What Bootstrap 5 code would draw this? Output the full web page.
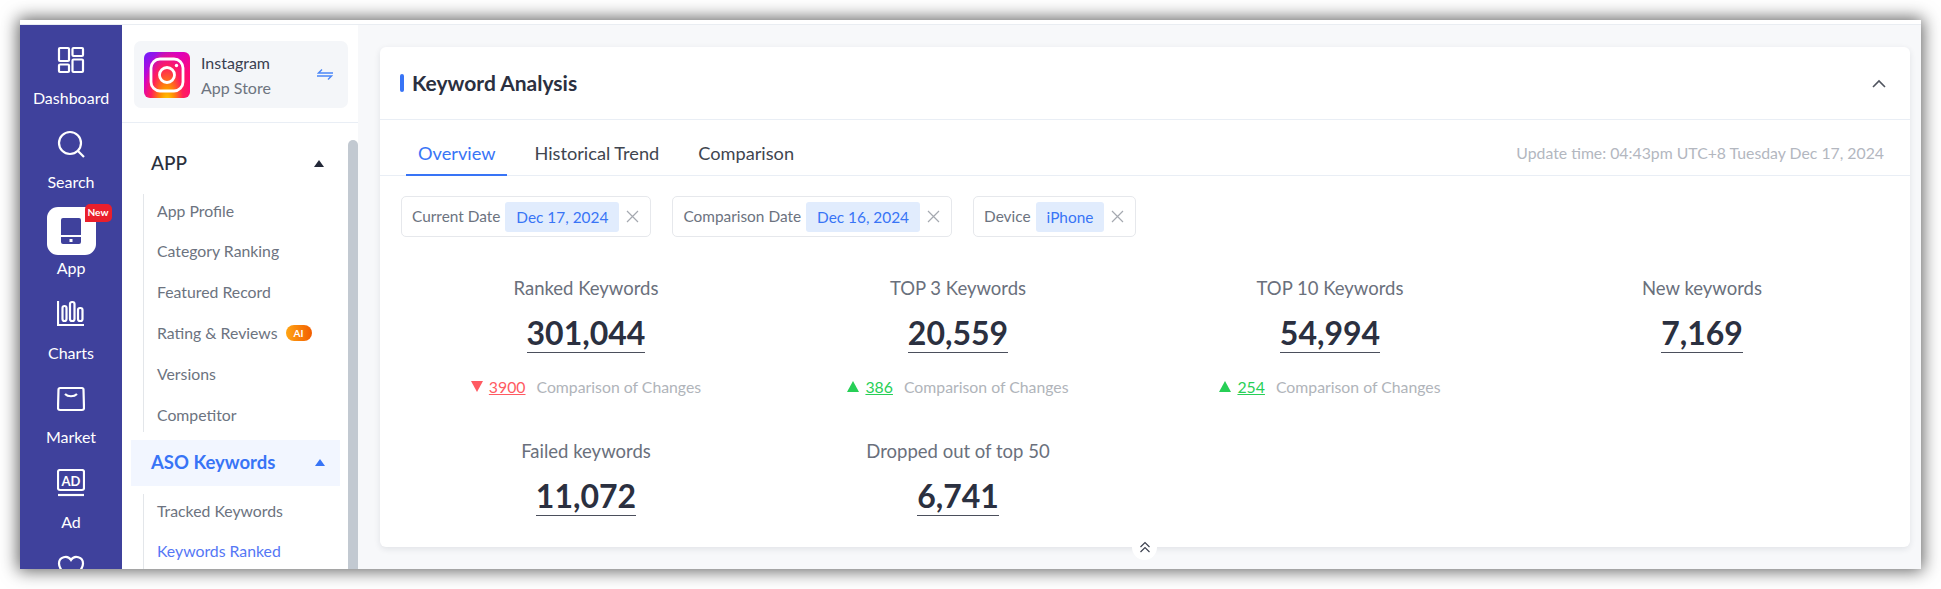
<!DOCTYPE html>
<html lang="en">
<head>
<meta charset="utf-8">
<title>Keyword Analysis</title>
<link href="https://cdn.jsdelivr.net/npm/bootstrap@5.3.0/dist/css/bootstrap.min.css" rel="stylesheet">
<style>
html,body{height:589px;overflow:hidden;background:#fff}
body{font-family:"Lato","Noto Sans",sans-serif;padding:20px;color:#2b3040}
.win{height:549px;background:#f7f8fa;box-shadow:0 0 16px 2px rgba(0,0,0,.62);overflow:hidden;display:flex;flex-direction:column}
.topstrip{height:5px;background:#fff;border-bottom:1px solid #e9edf2;flex:none}
.shell{flex:1;display:flex;min-height:0}
.rail{width:102px;flex:none;background:#3f419c;color:#fff;font-size:16px;text-align:center;overflow:hidden}
.rail-item{height:84px;display:flex;flex-direction:column;align-items:center;padding-top:21px}
.rail-item svg{width:28px;height:28px;flex:none;fill:none;stroke:#fff;stroke-width:2.2}
.rail-item span{margin-top:14px;line-height:20px}
.rail-app{height:85px;padding-top:14px}
.tile{width:49px;height:48px;flex:none;background:#fff;border-radius:11px;position:relative;display:flex;align-items:center;justify-content:center}
.rail-app span{margin-top:3px}
.rail-charts{height:85px;padding-top:22px}
.rail-charts span{margin-top:15px}
.rail-market{padding-top:22px}
.rail-ad{height:85px;padding-top:22px}
.rail-ad span{margin-top:15px}
.rail-fav{padding-top:22px}
.newtag{position:absolute;right:-16px;top:-3px;width:27px;height:18px;background:#ea1f2c;color:#fff;font-size:10px;font-weight:700;line-height:17px;border-radius:5px 5px 5px 0}
.side{width:236px;flex:none;background:#fff;display:flex;flex-direction:column;min-height:0}
.apphead{height:98px;border-bottom:1px solid #e9eef5;padding:16px 10px 0 12px;flex:none}
.appbox{height:67px;background:#f4f6f9;border-radius:7px;padding:10px;display:flex;align-items:center;gap:11px;font-size:16px;line-height:25px}
.appbox b{font-weight:400;display:block;color:#3a4050}
.appbox i{font-style:normal;display:block;color:#6d7480}
.insta{width:46px;height:46px;border-radius:6px;flex:none;background:radial-gradient(ellipse at 50% 112%,#ffd600 0,#ff9000 22%,#ff1f5a 50%,transparent 76%),linear-gradient(135deg,#6a1fff 0,#d700c8 36%,#ff0a78 70%);display:flex;align-items:center;justify-content:center}
.swap{margin-left:auto;margin-right:5px;width:16px;height:11px}
.sidebody{flex:1;display:flex;min-height:0;overflow:hidden}
.menu{flex:1;padding:17px 9px 0 9px;min-width:0}
.sbar{width:10px;flex:none;margin-top:17px;background:#c2c9d1;border-radius:5px 5px 0 0}
.mhead{height:46px;display:flex;align-items:center;justify-content:space-between;padding:0 15px 0 20px;font-size:19px;color:#2a2f3c;font-weight:500}
.mhead.on{background:#f2f6ff;color:#3874f6;font-weight:700;font-size:18.5px;margin:0 -1px 0 0}
.caret{width:0;height:0;border-left:5.5px solid transparent;border-right:5.5px solid transparent;border-bottom:7px solid #232838}
.on .caret{border-bottom-color:#3874f6}
.sub{list-style:none;margin:8px 0 8px 12px;padding:0 0 0 13px;border-left:1px solid #e3e6ea}
.sub li{height:34px;padding-bottom:1px;margin-bottom:6.8px;display:flex;align-items:center;gap:8px;font-size:15.8px;color:#6c7380}
.sub li:last-child{margin-bottom:0}
.sub li.cur{color:#5577f5}
.aitag{width:26px;height:16px;border-radius:8px;background:linear-gradient(90deg,#ffa514,#f25d00);color:#fff;font-size:10px;font-weight:700;text-align:center;line-height:16px}
.main{flex:1;padding:22px 11px 22px 22px;min-width:0}
.panel{background:#fff;border-radius:6px;height:100%;box-shadow:0 2px 6px rgba(30,40,60,.1);position:relative}
.phead{height:73px;border-bottom:1px solid #e9eef5;display:flex;align-items:center;justify-content:space-between;padding:0 24px 0 20px}
.ptitle{font-size:21px;font-weight:700;color:#2b3040;display:flex;align-items:center;gap:8px;margin:0}
.ptitle::before{content:"";width:4px;height:18px;border-radius:2px;background:#3874f6}
.tabbar{height:56px;border-bottom:1px solid #e9eef5;display:flex;padding:0 26px}
.tabx{padding:13px 12px 0;height:56px;line-height:40px;font-size:18.2px;color:#40454f;margin-right:15px}
.tabx.act{color:#3874f6;border-bottom:2px solid #3874f6}
.upd{margin-left:auto;padding-top:13px;line-height:40px;font-size:15.8px;color:#b3b7bf}
.chips{display:flex;gap:21px;padding:20px 20px 0 21px}
.chip{height:41px;border:1px solid #e6e8ec;border-radius:5px;display:flex;align-items:center;padding:0 11px 0 10px;font-size:15.4px;color:#6c7380}
.chip em{font-style:normal;height:30px;line-height:31px;padding:0 11px;background:#e1ecfd;color:#3874f6;border-radius:3px;margin:0 7px 0 5px}
.chip svg{width:13px;height:13px;stroke:#a5a9b0;stroke-width:1.2}
.stats{display:grid;grid-template-columns:repeat(4,372px);grid-auto-rows:163px;padding:31px 0 0 20px}
.stat{text-align:center}
.stat h6{font-size:18.500px;font-weight:400;color:#6a707c;margin:9px 0 0;line-height:22px}
.num{display:inline-block;font-size:32px;font-weight:700;line-height:38px;margin-top:15px;color:#2b3040;border-bottom:1px solid #4b4f5c}
.chg{display:flex;justify-content:center;align-items:center;gap:6px;font-size:15.8px;margin-top:22px;color:#b0b4ba}
.chg u{margin-right:5px}
.tri{width:0;height:0;border-left:6.5px solid transparent;border-right:6.5px solid transparent}
.dn{border-top:11px solid #ff5a62}
.up{border-bottom:11px solid #27cf56}
.red{color:#ff5a62}
.grn{color:#27cf56}
.fold{position:absolute;left:752px;bottom:-13px;width:25px;height:26px;background:#fff;border-radius:50%;display:flex;align-items:center;justify-content:center}
</style>
</head>
<body>
<div class="win">
  <div class="topstrip"></div>
  <div class="shell">
    <nav class="rail">
      <div class="rail-item"><svg viewBox="0 0 28 28"><rect x="2" y="2" width="10" height="13" rx="1"/><rect x="15.500" y="2" width="10.500" height="8" rx="1"/><rect x="2" y="18.500" width="10" height="7.500" rx="1"/><rect x="15.500" y="13.500" width="10.500" height="12.500" rx="1"/></svg><span>Dashboard</span></div>
      <div class="rail-item"><svg viewBox="0 0 28 28"><circle cx="13" cy="13" r="11"/><path d="M21 21l6 6"/></svg><span>Search</span></div>
      <div class="rail-item rail-app"><div class="tile"><svg width="20" height="26" viewBox="0 0 20 26" style="stroke:none;width:20px;height:26px"><path fill="#3f419c" d="M2 0h16a2 2 0 0 1 2 2v15H0V2a2 2 0 0 1 2-2zM0 19h20v5a2 2 0 0 1-2 2H2a2 2 0 0 1-2-2z"/><rect x="8.500" y="21" width="3" height="3" fill="#fff"/></svg><div class="newtag">New</div></div><span>App</span></div>
      <div class="rail-item rail-charts"><svg viewBox="0 0 28 28"><path d="M1 1v24h26"/><rect x="5.500" y="6" width="4" height="15" rx="2"/><rect x="13" y="2" width="4.500" height="19" rx="2"/><rect x="21" y="8" width="4.500" height="13" rx="2"/></svg><span>Charts</span></div>
      <div class="rail-item rail-market"><svg viewBox="0 0 28 28"><path d="M3 3h22a1.500 1.500 0 0 1 1.500 1.500L27 23a2 2 0 0 1-2 2H3a2 2 0 0 1-2-2L1.500 4.500A1.500 1.500 0 0 1 3 3z"/><path d="M8 9c3 3 9 3 12 0"/></svg><span>Market</span></div>
      <div class="rail-item rail-ad"><svg viewBox="0 0 28 28"><rect x="1" y="1" width="26" height="20" rx="2"/><path d="M1 26h26"/><text x="14" y="16.500" text-anchor="middle" font-size="13" font-weight="700" fill="#fff" stroke="none" font-family="Lato">AD</text></svg><span>Ad</span></div>
      <div class="rail-item rail-fav"><svg viewBox="0 0 28 28"><path d="M14 25C7 20 2 15 2 9.500A6.500 6.500 0 0 1 14 6a6.500 6.500 0 0 1 12 3.500C26 15 21 20 14 25z"/></svg></div>
    </nav>
    <aside class="side">
      <div class="apphead">
        <div class="appbox">
          <div class="insta"><svg width="36" height="36" viewBox="0 0 36 36" fill="none" stroke="#fff" stroke-width="2.800"><rect x="2" y="2" width="32" height="32" rx="9"/><circle cx="18" cy="18" r="7.500"/><circle cx="27.500" cy="8.500" r="1.700" fill="#fff" stroke="none"/></svg></div>
          <div><b>Instagram</b><i>App Store</i></div>
          <svg class="swap" viewBox="0 0 16 11" fill="none" stroke="#4a86f7" stroke-width="1.400"><path d="M16 4H1.500L5 .5M0 7h14.500L11 10.500"/></svg>
        </div>
      </div>
      <div class="sidebody">
        <div class="menu">
          <div class="mhead"><span>APP</span><span class="caret"></span></div>
          <ul class="sub">
            <li>App Profile</li><li>Category Ranking</li><li>Featured Record</li>
            <li>Rating &amp; Reviews <span class="aitag">AI</span></li><li>Versions</li><li>Competitor</li>
          </ul>
          <div class="mhead on"><span>ASO Keywords</span><span class="caret"></span></div>
          <ul class="sub">
            <li>Tracked Keywords</li><li class="cur">Keywords Ranked</li>
          </ul>
        </div>
        <div class="sbar"></div>
      </div>
    </aside>
    <main class="main">
      <section class="panel">
        <header class="phead">
          <h1 class="ptitle">Keyword Analysis</h1>
          <svg width="14" height="9" viewBox="0 0 14 9" fill="none" stroke="#50545f" stroke-width="1.600"><path d="M1 8l6-6 6 6"/></svg>
        </header>
        <div class="tabbar">
          <div class="tabx act">Overview</div><div class="tabx">Historical Trend</div><div class="tabx">Comparison</div>
          <div class="upd">Update time: 04:43pm UTC+8 Tuesday Dec 17, 2024</div>
        </div>
        <div class="chips">
          <div class="chip">Current Date<em>Dec 17, 2024</em><svg viewBox="0 0 13 13"><path d="M1 1l11 11M12 1L1 12"/></svg></div>
          <div class="chip">Comparison Date<em>Dec 16, 2024</em><svg viewBox="0 0 13 13"><path d="M1 1l11 11M12 1L1 12"/></svg></div>
          <div class="chip">Device<em>iPhone</em><svg viewBox="0 0 13 13"><path d="M1 1l11 11M12 1L1 12"/></svg></div>
        </div>
        <div class="stats">
          <div class="stat"><h6>Ranked Keywords</h6><div class="num">301,044</div><div class="chg"><span class="tri dn"></span><u class="red">3900</u>Comparison of Changes</div></div>
          <div class="stat"><h6>TOP 3 Keywords</h6><div class="num">20,559</div><div class="chg"><span class="tri up"></span><u class="grn">386</u>Comparison of Changes</div></div>
          <div class="stat"><h6>TOP 10 Keywords</h6><div class="num">54,994</div><div class="chg"><span class="tri up"></span><u class="grn">254</u>Comparison of Changes</div></div>
          <div class="stat"><h6>New keywords</h6><div class="num">7,169</div></div>
          <div class="stat"><h6>Failed keywords</h6><div class="num">11,072</div></div>
          <div class="stat"><h6>Dropped out of top 50</h6><div class="num">6,741</div></div>
        </div>
        <div class="fold"><svg width="12" height="12" viewBox="0 0 12 12" fill="none" stroke="#3d4250" stroke-width="1.200"><path d="M1.500 6L6 1.500 10.500 6M1.500 11L6 6.500 10.500 11"/></svg></div>
      </section>
    </main>
  </div>
</div>
<script src="https://cdn.jsdelivr.net/npm/bootstrap@5.3.0/dist/js/bootstrap.bundle.min.js"></script>
</body>
</html>
